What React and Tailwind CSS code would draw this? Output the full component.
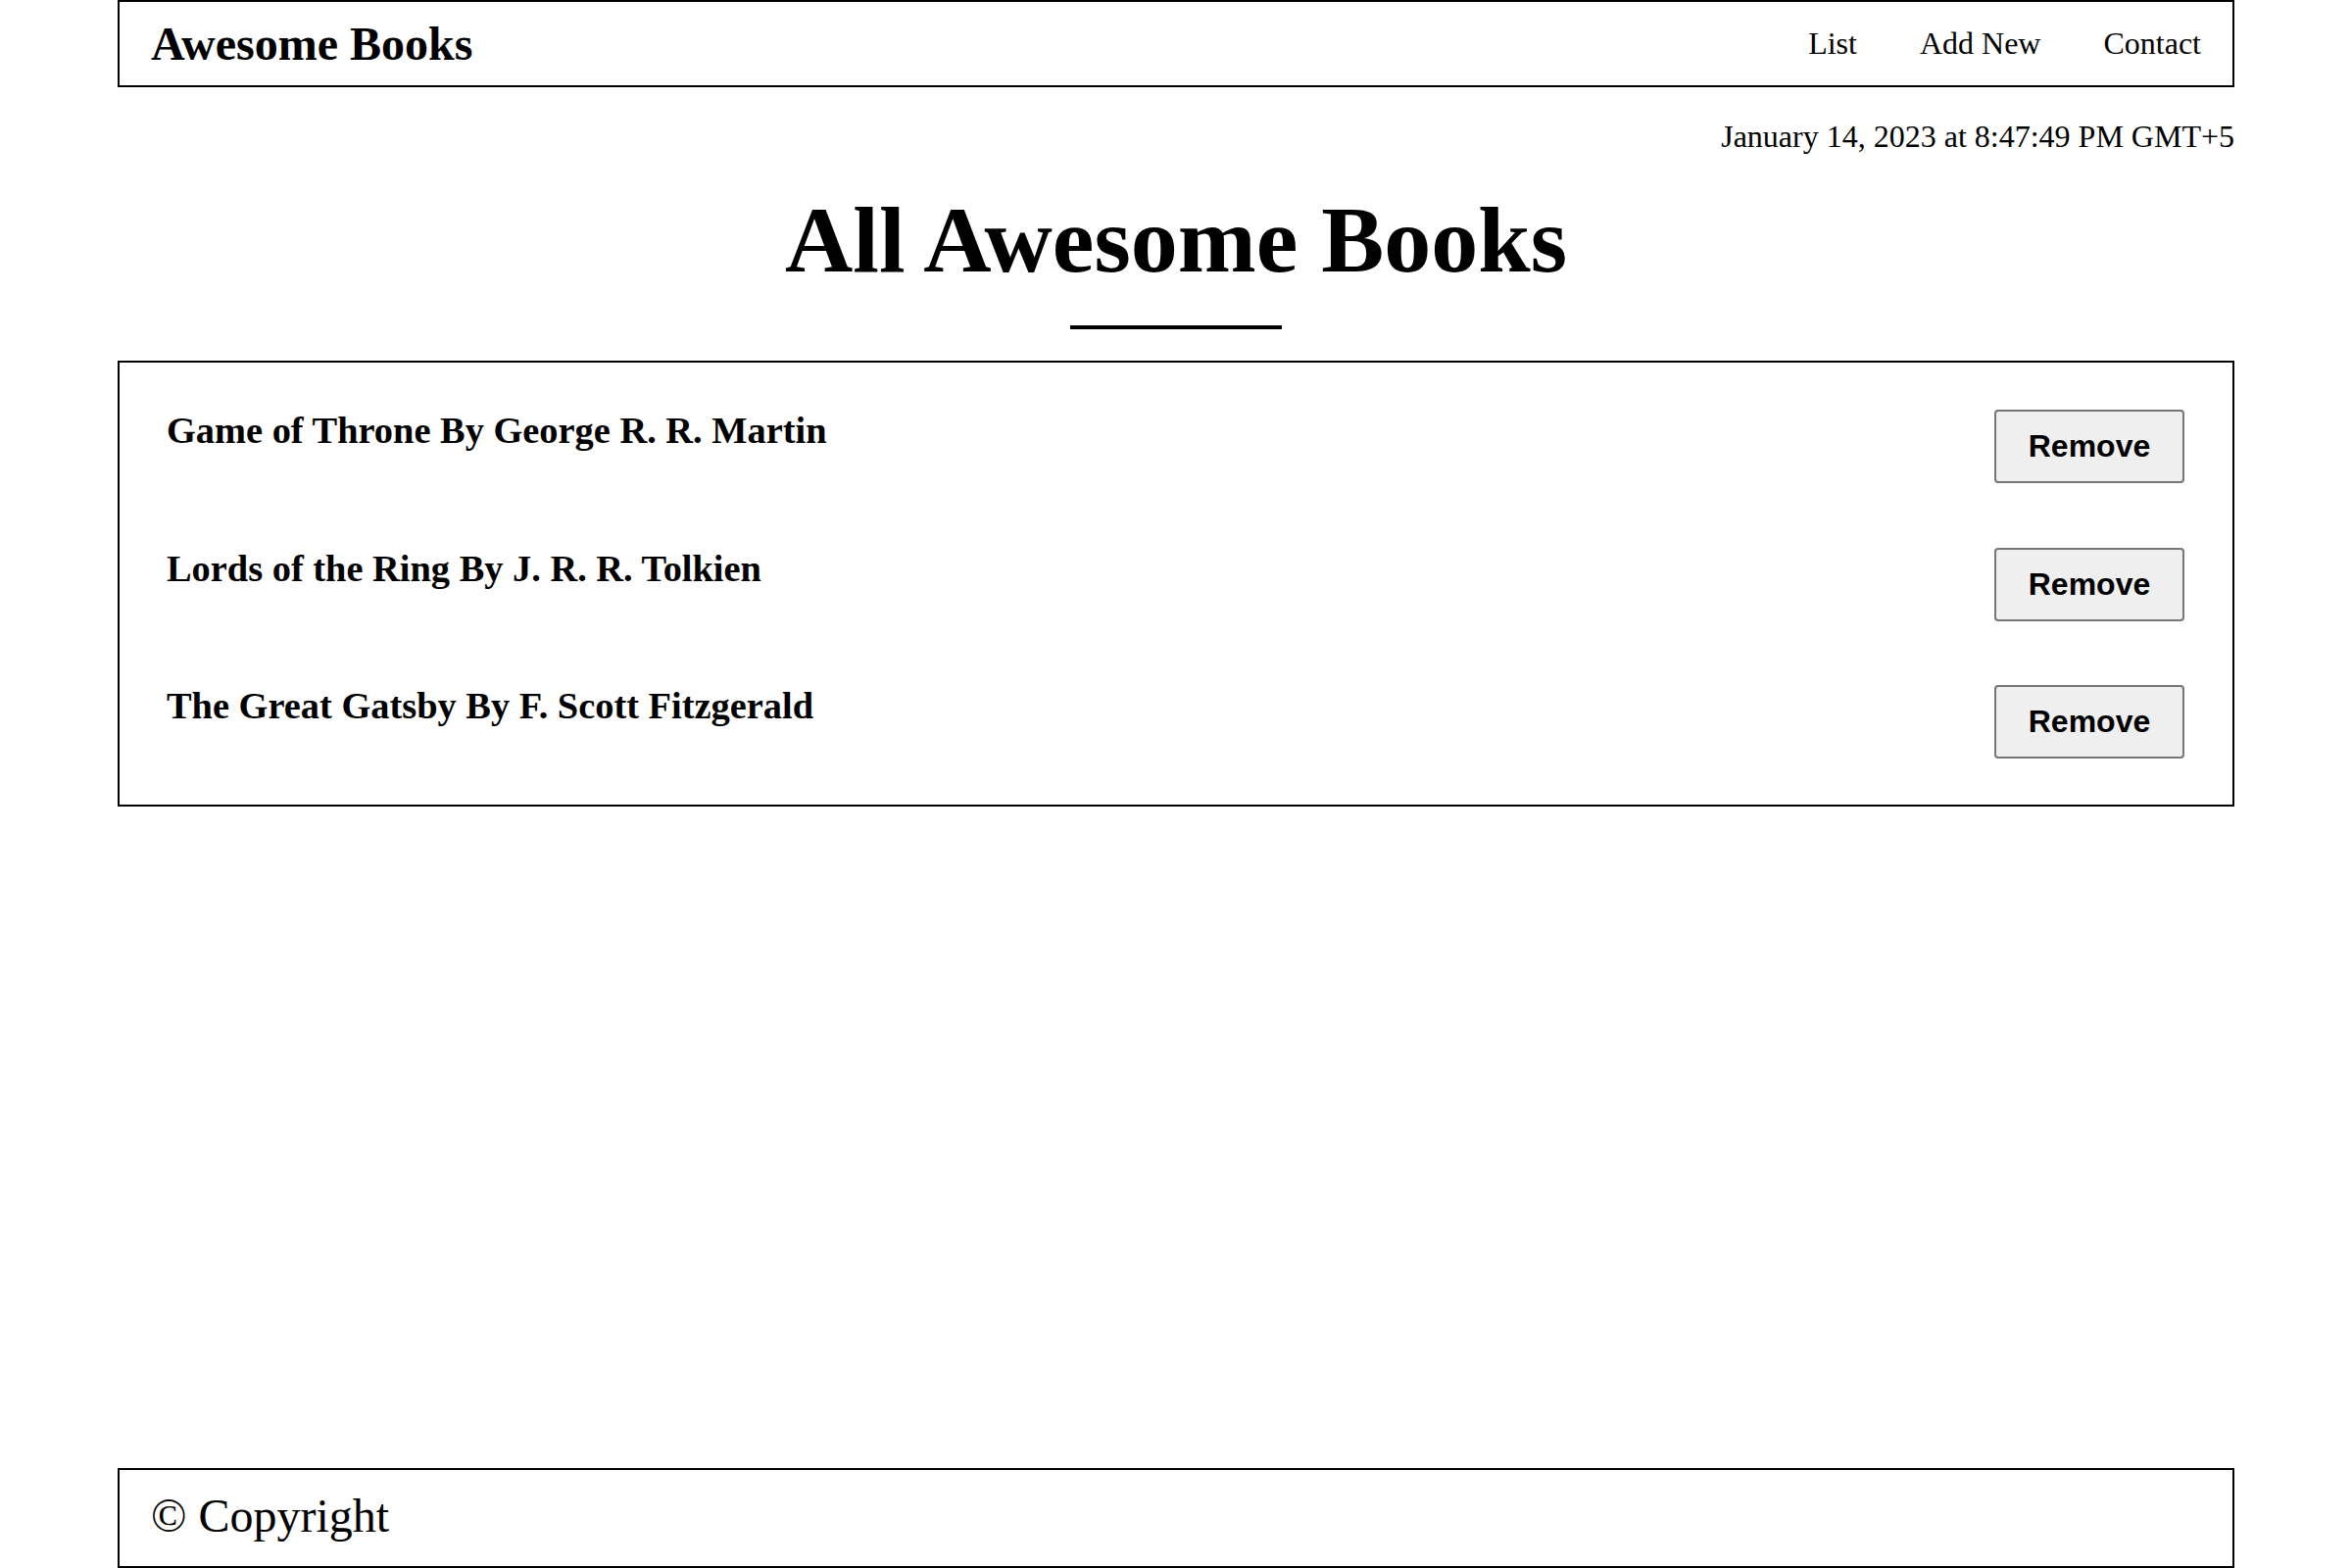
const books = [
  { id: 1, title: 'Game of Throne', author: 'George R. R. Martin' },
  { id: 2, title: 'Lords of the Ring', author: 'J. R. R. Tolkien' },
  { id: 3, title: 'The Great Gatsby', author: 'F. Scott Fitzgerald' },
];

export default function App() {
  return (
    <div className="min-h-screen flex flex-col bg-white text-black font-['Liberation_Serif','Times_New_Roman',serif]">
      <header className="mx-auto w-[2160px] h-[89px] border-2 border-black flex items-center justify-between px-8">
        <h1 className="text-[48px] font-bold leading-[1.15]">Awesome Books</h1>
        <nav className="flex gap-16 text-[32px] leading-[1.15]">
          <a href="#list">List</a>
          <a href="#add">Add New</a>
          <a href="#contact">Contact</a>
        </nav>
      </header>

      <main className="mx-auto w-[2160px] flex flex-col">
        <p className="mt-8 text-right text-[32px] leading-[1.15]">January 14, 2023 at 8:47:49 PM GMT+5</p>
        <h2 className="mt-8 text-center text-[96px] font-bold leading-[1.15]">All Awesome Books</h2>
        <div className="mx-auto mt-8 w-[216px] h-1 bg-black" />

        <ul className="mt-8 border-2 border-black pl-12 pr-[49px] pt-12 pb-[47px] flex flex-col gap-[65.5px]">
          {books.map((book) => (
            <li key={book.id} className="flex items-start justify-between">
              <h3 className="text-[38.4px] font-bold leading-[1.15] -mt-px">
                {book.title} By {book.author}
              </h3>
              <button className="w-[194px] h-[75px] border-2 border-[#767676] bg-[#efefef] rounded-[4px] text-[32px] font-bold leading-[1.15] font-['Liberation_Sans',Arial,sans-serif]">
                Remove
              </button>
            </li>
          ))}
        </ul>
      </main>

      <footer className="mt-auto mx-auto w-[2160px] h-[102px] border-2 border-black px-8 pt-[19px]">
        <p className="text-[48px] leading-[1.15]">© Copyright</p>
      </footer>
    </div>
  );
}
